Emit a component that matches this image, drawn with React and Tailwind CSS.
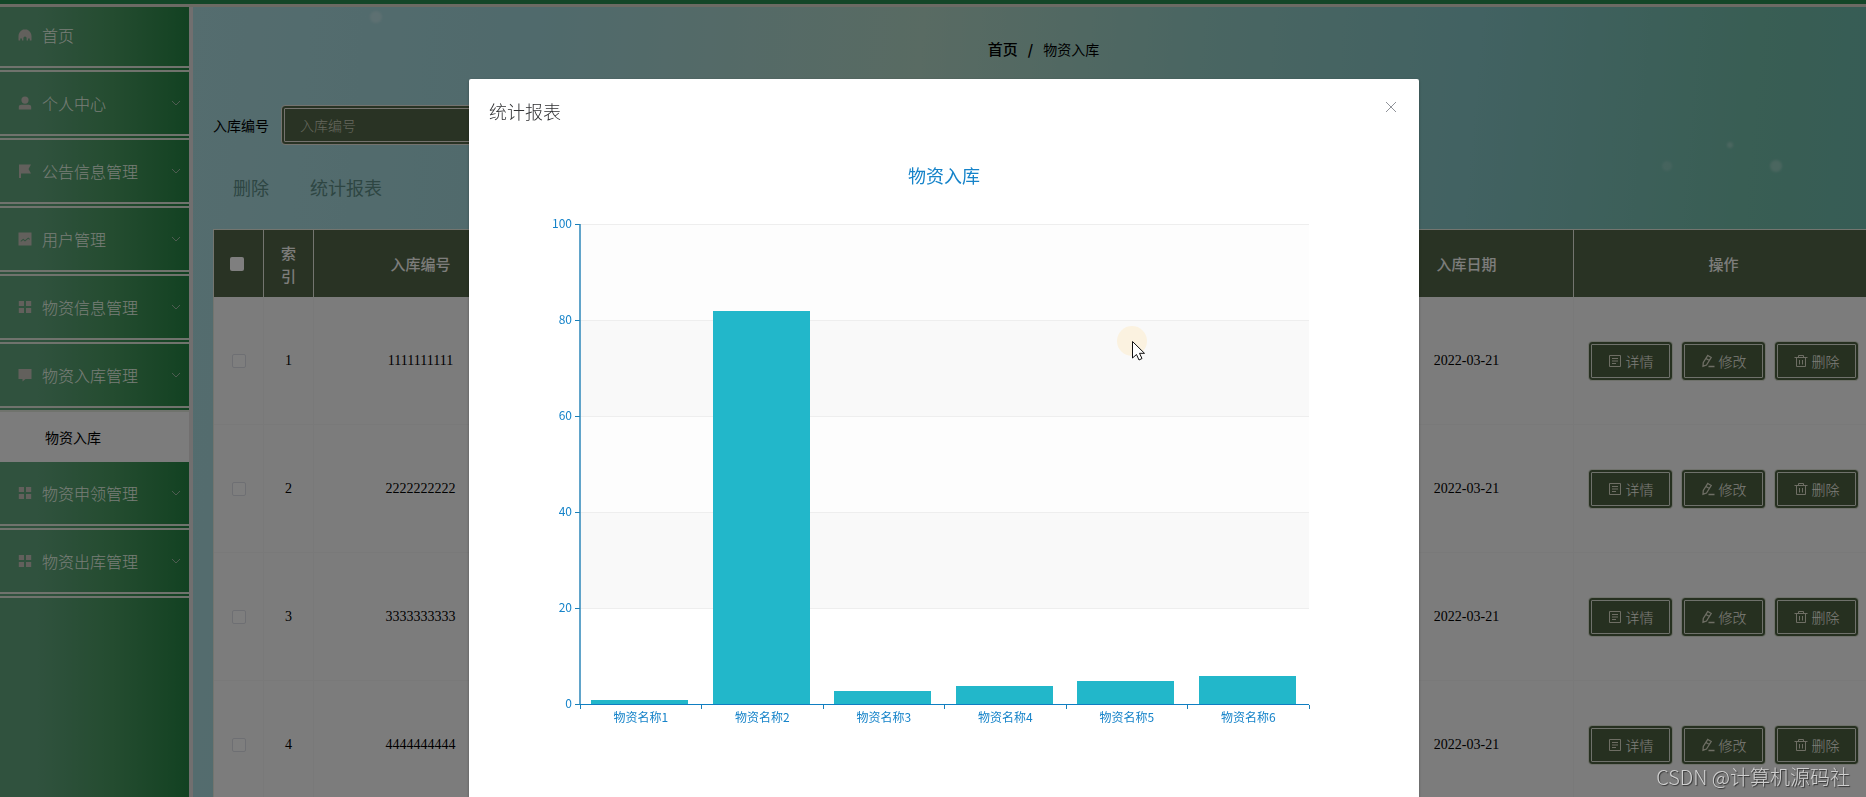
import React, { useState } from "react";
import clsx from "clsx";

const menus = [
  { name: "首页", icon: "home" },
  { name: "个人中心", icon: "user", arrow: true },
  { name: "公告信息管理", icon: "flag", arrow: true },
  { name: "用户管理", icon: "picture", arrow: true },
  { name: "物资信息管理", icon: "grid", arrow: true },
  { name: "物资入库管理", icon: "comment", arrow: true, children: ["物资入库"] },
  { name: "物资申领管理", icon: "grid", arrow: true },
  { name: "物资出库管理", icon: "grid", arrow: true },
];

const rows = [
  { id: 1, code: "1111111111", date: "2022-03-21" },
  { id: 2, code: "2222222222", date: "2022-03-21" },
  { id: 3, code: "3333333333", date: "2022-03-21" },
  { id: 4, code: "4444444444", date: "2022-03-21" },
];

const chartData = [
  { name: "物资名称1", value: 1 },
  { name: "物资名称2", value: 82 },
  { name: "物资名称3", value: 3 },
  { name: "物资名称4", value: 4 },
  { name: "物资名称5", value: 5 },
  { name: "物资名称6", value: 6 },
];

// ── Icons ────────────────────────────────────────────────────────────────────
const menuPaths = {
  home: "M5 1.500h4c2.800 1.600 4.500 3.700 4.500 6.500v4.500h-1.700v-2h-1.800v2H8.600V10a1.600 1.600 0 0 0-3.200 0v2.500H4v-2H2.200v2H.5V8c0-2.800 1.700-4.900 4.500-6.500z",
  user: "M7 .5a3.6 3.6 0 1 1 0 7.2 3.6 3.6 0 0 1 0-7.2zM.8 13.5V11c0-1.500 1-2.200 2.500-2.200h7.400c1.500 0 2.500.7 2.500 2.200v2.500z",
  flag: "M1 .5h12L10.500 5 13 9.500H3V14H1z",
  picture: "M.5.5h13v13H.5zM2.500 9l2.700-2.300L7 8.200l3.300-2.700L12 7l-.6.7-1.200-1L7 9.400 5.200 8 3 9.800z",
  grid: "M.8 1H6v5H.8zM8 1h5.200v5H8zM.8 8H6v5H.8zM8 8h5.200v5H8z",
  comment: "M.5 1h13v10H7.500L4.500 13.500V11h-4z",
};

function MenuIcon({ name }) {
  return (
    <svg viewBox="0 0 14 14" className="h-3.5 w-3.5 shrink-0 fill-[#c4c0b8]" fillRule="evenodd" aria-hidden="true">
      <path d={menuPaths[name]} />
    </svg>
  );
}

function Chevron() {
  return (
    <svg viewBox="0 0 10 10" className="h-2.5 w-2.5 fill-none stroke-[#9cb8a2]" aria-hidden="true">
      <path d="M1 3l4 4 4-4" />
    </svg>
  );
}

function ActionIcon({ type }) {
  return (
    <svg viewBox="0 0 14 14" className="h-3.5 w-3.5 fill-none stroke-[#dcdcc8]" aria-hidden="true">
      {type === "detail" && <path d="M1.500 1.500h11v11h-11zM4 4.500h6M4 7h6M4 9.500h4" />}
      {type === "edit" && (
        <path d="M6.800 1.500l3.400 2-4.700 7.500-3.500 1.200.3-3.700zM5 4.500l3.400 2M7.500 12.500h6" strokeWidth="1.300" />
      )}
      {type === "delete" && <path d="M.5 3.500h13M4.500 3.500v-2h5v2M2.500 3.500v9h9v-9M5.500 6v4.500M8.500 6v4.500" />}
    </svg>
  );
}

function ActionButton({ type, children }) {
  return (
    <button
      type="button"
      className="flex h-10 w-[85px] items-center justify-center gap-1 rounded border-4 border-double border-[#dfe3d6] bg-[#4c6040] text-sm font-light text-[#fafaf0]"
    >
      <ActionIcon type={type} />
      {children}
    </button>
  );
}

// ── Bar chart ────────────────────────────────────────────────────────────────
const plot = { left: 91, right: 820, top: 92, bottom: 572 };

function BarReport() {
  const band = (plot.right - plot.left) / chartData.length;
  const y = (v) => Math.round(plot.bottom - ((plot.bottom - plot.top) * v) / 100);
  return (
    <svg viewBox="0 0 910 640" className="block w-full" role="img" aria-label="物资入库">
      <rect x={plot.left} y={y(100)} width={plot.right - plot.left} height={y(80) - y(100)} fill="#fdfdfd" />
      <rect x={plot.left} y={y(80)} width={plot.right - plot.left} height={y(60) - y(80)} fill="#f9f9f9" />
      <rect x={plot.left} y={y(60)} width={plot.right - plot.left} height={y(40) - y(60)} fill="#fdfdfd" />
      <rect x={plot.left} y={y(40)} width={plot.right - plot.left} height={y(20) - y(40)} fill="#f9f9f9" />

      <text x="455" y="50" textAnchor="middle" fontSize="18" fill="#1583c9">物资入库</text>

      {[0, 20, 40, 60, 80, 100].map((v) => (
        <g key={v}>
          {v > 0 && <path d={`M${plot.left} ${y(v) - 0.5}H${plot.right}`} stroke="#eeeeee" />}
          <path d={`M${plot.left - 5} ${y(v) - 0.5}H${plot.left}`} stroke="#1a7fb8" />
          <text x={plot.left - 8} y={y(v) + 3} textAnchor="end" fontSize="12" fill="#1583c9">{v}</text>
        </g>
      ))}

      {chartData.map((d, i) => (
        <g key={d.name}>
          <rect
            x={Math.round(plot.left + band * i + 11)}
            y={y(d.value)}
            width="97"
            height={plot.bottom - y(d.value)}
            fill="#22b7ca"
          />
          <text x={plot.left + band * (i + 0.5)} y={plot.bottom + 17} textAnchor="middle" fontSize="12" fill="#1583c9">
            {d.name}
          </text>
        </g>
      ))}

      {[0, 1, 2, 3, 4, 5, 6].map((i) => (
        <path key={i} d={`M${Math.floor(plot.left + band * i) + 0.5} ${plot.bottom}v4`} stroke="#1a7fb8" />
      ))}
      <path d={`M${plot.left} ${plot.top - 1}V${plot.bottom}`} stroke="#2c86b8" strokeWidth="1.500" />
      <path d={`M${plot.left} ${plot.bottom - 0.5}H${plot.right}`} stroke="#0f7ec2" />

      {/* Pointer with click highlight */}
      <circle cx="643" cy="208" r="15" fill="#fbf2e0" />
      <path
        d="M643.500 208.500v16.500l4-3.500 2.500 5.500 3-1.500-2.500-5.200h5z"
        fill="#fff"
        stroke="#111"
        strokeLinejoin="round"
      />
    </svg>
  );
}

function Sidebar() {
  return (
    <nav className="w-[193px] shrink-0 border-r-4 border-[#e2dede] bg-linear-to-r from-[#60a47c] from-20% via-[#489860] via-60% to-[#248444]">
      {menus.map((m) => (
        <div key={m.name}>
          <a
            href="#"
            className="flex h-[68px] items-center border-b-6 border-double border-[#e0e6da] pr-2 pl-[18px] font-light text-[#f0fbee]"
          >
            <MenuIcon name={m.icon} />
            <span className="ml-2.5 flex-1">{m.name}</span>
            {m.arrow && <Chevron />}
          </a>
          {m.children?.map((c) => (
            <a key={c} href="#" className="flex h-[50px] items-center bg-[#f8f8f8] pl-[45px] text-sm text-black">
              {c}
            </a>
          ))}
        </div>
      ))}
    </nav>
  );
}

function StockTable() {
  const th = "h-[68px] border-t border-r border-[#e6eadf] px-4 text-center text-[15px] leading-[23px] font-medium";
  const td = "h-32 border-r border-b border-[#f2f2f2] text-center";
  return (
    <table className="w-full table-fixed border-separate border-spacing-0 border-l border-[#e6eadf]">
      <colgroup>
        <col className="w-[50px]" />
        <col className="w-[50px]" />
        <col className="w-[214px]" />
        <col span={4} />
        <col className="w-[214px]" />
        <col className="w-[300px]" />
      </colgroup>
      <thead className="bg-[#526648] text-[#fafaf6]">
        <tr>
          <th className={th}>
            <input type="checkbox" aria-label="全选" className="block h-3.5 w-3.5 appearance-none rounded-xs bg-white" />
          </th>
          <th className={th}>索引</th>
          <th className={th}>入库编号</th>
          <th className={th} colSpan={4} />
          <th className={th}>入库日期</th>
          <th className={th}>操作</th>
        </tr>
      </thead>
      <tbody className="bg-[#f8f8f8] font-['Liberation_Serif','Noto_Sans_CJK_SC',serif] text-sm text-black">
        {rows.map((r) => (
          <tr key={r.id}>
            <td className={td}>
              <input
                type="checkbox"
                aria-label={`选择 ${r.id}`}
                className="mx-auto block h-3.5 w-3.5 appearance-none rounded-xs border border-[#dcdfe6] bg-[#fdfdfd]"
              />
            </td>
            <td className={td}>{r.id}</td>
            <td className={td}>{r.code}</td>
            <td className={td} colSpan={4} />
            <td className={td}>{r.date}</td>
            <td className={clsx(td, "font-['Noto_Sans_CJK_SC',sans-serif]")}>
              <div className="flex justify-center gap-2">
                <ActionButton type="detail">详情</ActionButton>
                <ActionButton type="edit">修改</ActionButton>
                <ActionButton type="delete">删除</ActionButton>
              </div>
            </td>
          </tr>
        ))}
      </tbody>
    </table>
  );
}

function ReportDialog({ onClose }) {
  return (
    <div className="fixed inset-0 z-20 flex items-start justify-center overflow-hidden bg-black/50 pt-[79px] pl-[22px]">
      <div
        role="dialog"
        aria-labelledby="report-title"
        className="w-[950px] max-w-full shrink-0 rounded-xs bg-white px-5 pt-5 pb-8 shadow-[0_1px_3px_rgba(0,0,0,0.3)]"
      >
        <div className="flex items-start justify-between pb-2.5">
          <h2 id="report-title" className="text-lg leading-6 font-light text-[#303133]">统计报表</h2>
          <button type="button" aria-label="关闭" onClick={onClose} className="h-4 w-4">
            <svg viewBox="0 0 16 16" className="h-4 w-4 fill-none stroke-[#909399]">
              <path d="M3 3l10 10M13 3L3 13" />
            </svg>
          </button>
        </div>
        <BarReport />
      </div>
    </div>
  );
}

export default function App() {
  const [open, setOpen] = useState(true);

  return (
    <div className="flex min-h-screen flex-col overflow-hidden font-['Noto_Sans_CJK_SC',sans-serif]">
      <header className="relative z-10 -mb-[3px] h-[7px] border-b-3 border-[#d8d4c8] bg-[#288c50]" />

      <div className="flex flex-1">
        <Sidebar />

        <main className="relative min-w-0 flex-1 bg-[linear-gradient(95deg,#aadade_0%,#a0d4d8_20%,#b2d6c6_42%,#94ccc4_58%,#84c4c4_74%,#72bca8_90%,#6cb8ac_100%)] pl-5">
          {/* Light spots of the backdrop */}
          <span className="absolute top-[7px] left-[177px] h-3 w-3 rounded-full bg-white/25 blur-[1px]" />
          <span className="absolute top-[157px] right-[194px] h-2.5 w-2.5 rounded-full bg-white/15 blur-[1px]" />
          <span className="absolute top-[138px] right-[133px] h-1.5 w-1.5 rounded-full bg-white/25 blur-[1px]" />
          <span className="absolute top-[156px] right-[84px] h-3 w-3 rounded-full bg-white/25 blur-[1px]" />

          <div className="relative -mr-2">
            <nav aria-label="面包屑" className="flex h-[101px] items-center justify-center pb-3 text-sm text-black">
              <a href="#" className="text-[15px] font-medium">首页</a>
              <span className="mx-2.5 font-bold">/</span>
              <span>物资入库</span>
            </nav>

            <form className="flex items-center" onSubmit={(e) => e.preventDefault()}>
              <label htmlFor="code" className="mr-3 text-sm text-black">入库编号</label>
              <input
                id="code"
                placeholder="入库编号"
                className="h-10 w-60 rounded border-4 border-double border-[#e8e4dc] bg-[#526648] px-[15px] text-sm font-light text-white placeholder:text-[#ccd0bc]"
              />
            </form>

            <div className="flex h-[84px] items-center gap-[41px] pl-5 text-lg text-[#5c8c86]">
              <button type="button">删除</button>
              <button type="button" onClick={() => setOpen(true)}>统计报表</button>
            </div>

            <StockTable />
          </div>
        </main>
      </div>

      {open && <ReportDialog onClose={() => setOpen(false)} />}

      <div className="fixed right-4 bottom-1.5 z-30 text-xl leading-7 font-light text-[#d0d0d0] [text-shadow:1px_1px_1px_#333]">
        CSDN @计算机源码社
      </div>
    </div>
  );
}
